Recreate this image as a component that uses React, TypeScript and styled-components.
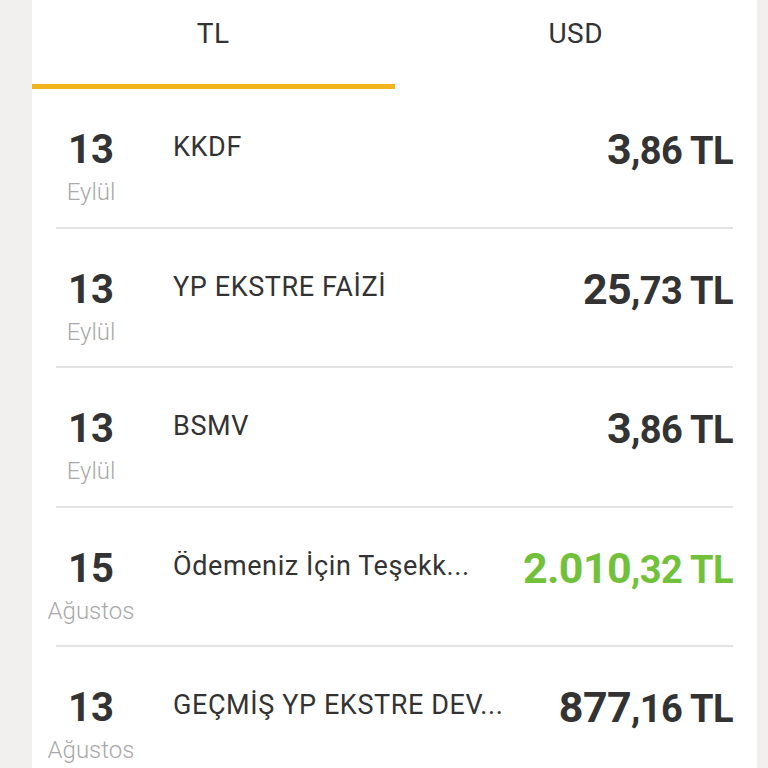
import * as React from 'react';
import styled, { createGlobalStyle } from 'styled-components';

type Transaction = {
  day: string;
  month: string;
  title: string;
  whole: string;
  cents: string;
  incoming?: boolean;
};

const transactions: Transaction[] = [
  { day: '13', month: 'Eylül', title: 'KKDF', whole: '3', cents: ',86 TL' },
  { day: '13', month: 'Eylül', title: 'YP EKSTRE FAİZİ', whole: '25', cents: ',73 TL' },
  { day: '13', month: 'Eylül', title: 'BSMV', whole: '3', cents: ',86 TL' },
  {
    day: '15',
    month: 'Ağustos',
    title: 'Ödemeniz İçin Teşekk...',
    whole: '2.010',
    cents: ',32 TL',
    incoming: true,
  },
  { day: '13', month: 'Ağustos', title: 'GEÇMİŞ YP EKSTRE DEV...', whole: '877', cents: ',16 TL' },
];

const App = () => {
  const [tab, setTab] = React.useState<'TL' | 'USD'>('TL');

  return (
    <>
      <GlobalStyle />
      <Page>
        <Panel>
          <TabBar>
            {(['TL', 'USD'] as const).map((t) => (
              <Tab key={t} active={tab === t} onClick={() => setTab(t)}>
                {t}
              </Tab>
            ))}
          </TabBar>
          {transactions.map((tx, i) => (
            <Row key={i}>
              <DateCol>
                <Day>{tx.day}</Day>
                <Month>{tx.month}</Month>
              </DateCol>
              <Title>{tx.title}</Title>
              <Amount incoming={tx.incoming}>
                {tx.whole}
                <Cents>{tx.cents}</Cents>
              </Amount>
            </Row>
          ))}
        </Panel>
      </Page>
    </>
  );
};

const GlobalStyle = createGlobalStyle`
  html, body {
    margin: 0;
    padding: 0;
    height: 100%;
    overflow: hidden;
    background: #f1f0ee;
  }
  body {
    font-family: Roboto, "Noto Sans", sans-serif;
    color: #333333;
  }
`;

const Page = styled.div`
  display: flex;
  padding-left: 32px;
  padding-right: 11px;
  height: 768px;
`;

const Panel = styled.div`
  flex: 1;
  background: #ffffff;
  display: flex;
  flex-direction: column;
`;

const TabBar = styled.div`
  display: flex;
`;

const Tab = styled.div<{ active: boolean }>`
  flex: 1;
  height: 89px;
  box-sizing: border-box;
  padding-top: 18px;
  text-align: center;
  font-size: 28px;
  line-height: 32px;
  letter-spacing: 0.5px;
  color: #333333;
  border-bottom: 5px solid ${({ active }) => (active ? '#f1b41c' : 'transparent')};
  cursor: pointer;
`;

const Row = styled.div`
  display: flex;
  align-items: flex-start;
  margin: 0 24px;
  padding: 36px 0 19.5px;
  border-bottom: 2px solid #e3e3e3;
  flex-shrink: 0;
`;

const DateCol = styled.div`
  width: 70px;
  margin-top: 3px;
  display: flex;
  flex-direction: column;
  align-items: center;
`;

const Day = styled.div`
  font-size: 40px;
  line-height: 44px;
  font-weight: 700;
  color: #333333;
`;

const Month = styled.div`
  margin-top: 5px;
  font-size: 24px;
  line-height: 30px;
  font-weight: 300;
  color: #a9a9a9;
  white-space: nowrap;
`;

const Title = styled.div`
  flex: 1;
  margin-left: 47px;
  margin-top: 7px;
  font-size: 27px;
  line-height: 30px;
  letter-spacing: 0.6px;
  color: #333333;
  white-space: nowrap;
  overflow: hidden;
`;

const Amount = styled.div<{ incoming?: boolean }>`
  font-size: 43px;
  line-height: 48px;
  font-weight: 700;
  letter-spacing: -0.6px;
  color: ${({ incoming }) => (incoming ? '#72c13a' : '#333333')};
  white-space: nowrap;
`;

const Cents = styled.span`
  font-size: 38px;
`;

export default App;
